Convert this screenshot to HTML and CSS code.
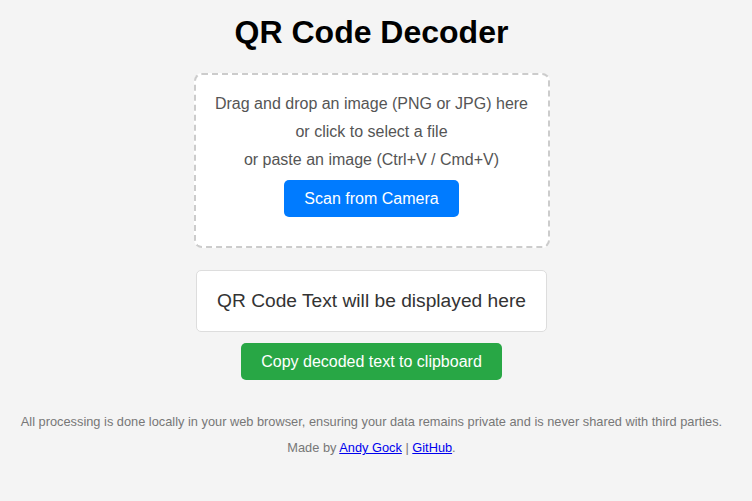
FILE: index.html
```html
<!DOCTYPE html>
<html lang="en">
<head>
<meta charset="utf-8">
<title>QR Code Decoder</title>
<link rel="stylesheet" href="styles.css">
</head>
<body>
<main class="page">
  <h1 class="title">QR Code Decoder</h1>
  <div class="dropzone">
    <p class="line">Drag and drop an image (PNG or JPG) here</p>
    <p class="line">or click to select a file</p>
    <p class="line">or paste an image (Ctrl+V / Cmd+V)</p>
    <button class="btn btn-blue">Scan from Camera</button>
  </div>
  <div class="result">QR Code Text will be displayed here</div>
  <button class="btn btn-green">Copy decoded text to clipboard</button>
  <p class="note">All processing is done locally in your web browser, ensuring your data remains private and is never shared with third parties.</p>
  <p class="credit">Made by <a href="#">Andy Gock</a> | <a href="#">GitHub</a>.</p>
</main>
</body>
</html>
```
FILE: styles.css
```css
html, body {
  margin: 0;
  padding: 0;
  background: #f4f4f4;
  font-family: "Liberation Sans", Arial, sans-serif;
}
.page {
  display: flex;
  flex-direction: column;
  align-items: center;
  padding: 14px 9px 0 0;
  text-align: center;
}
.title {
  margin: 0;
  font-size: 32px;
  line-height: 37px;
  font-weight: bold;
  color: #000;
}
.dropzone {
  box-sizing: border-box;
  width: 356px;
  height: 175px;
  margin-top: 22px;
  padding: 15px 10px 0;
  border: 2px dashed #cccccc;
  border-radius: 8px;
  background: #fff;
  display: flex;
  flex-direction: column;
  align-items: center;
}
.line {
  margin: 0;
  font-size: 16px;
  line-height: 28px;
  color: #555;
}
.btn {
  box-sizing: border-box;
  height: 37px;
  border: none;
  border-radius: 5px;
  color: #fff;
  font-family: "Liberation Sans", Arial, sans-serif;
  font-size: 16px;
  padding: 0;
  cursor: pointer;
}
.btn-blue {
  width: 175px;
  margin-top: 6px;
  background: #007bff;
}
.result {
  box-sizing: border-box;
  width: 351px;
  height: 62px;
  margin-top: 22px;
  border: 1px solid #dddddd;
  border-radius: 5px;
  background: #fff;
  display: flex;
  align-items: center;
  justify-content: center;
  font-size: 19.2px;
  color: #333;
}
.btn-green {
  width: 261px;
  margin-top: 11px;
  background: #28a745;
}
.note, .credit {
  margin: 0;
  font-size: 12.8px;
  line-height: 20px;
  color: #777;
  white-space: nowrap;
}
.note {
  margin-top: 32px;
}
.credit {
  margin-top: 6px;
}
.credit a {
  color: #0000ee;
}
```
